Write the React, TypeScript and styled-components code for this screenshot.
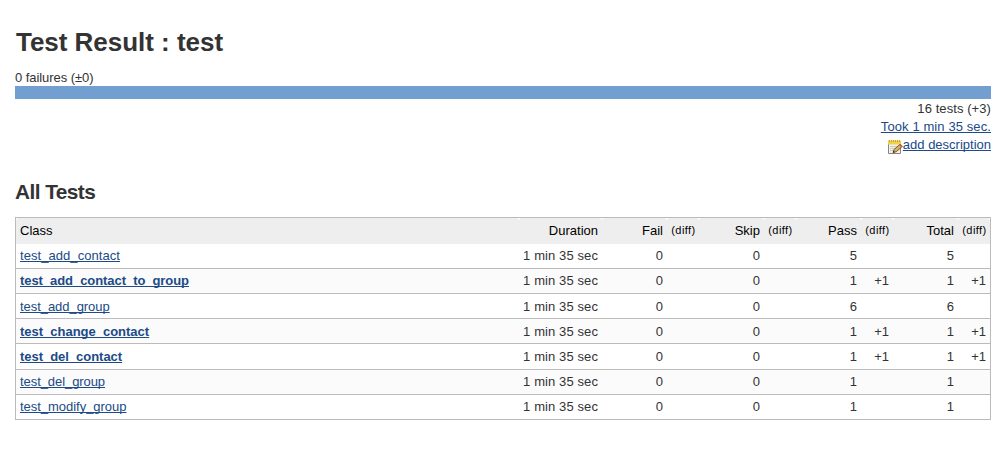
import React from 'react';
import styled, { createGlobalStyle } from 'styled-components';

const GlobalStyle = createGlobalStyle`
  * { box-sizing: border-box; }
  body {
    margin: 0;
    background: #fff;
    color: #333;
    font: 13px/18px "Liberation Sans", Arial, sans-serif;
  }
`;

const Page = styled.main`
  height: 460px;
  padding: 25px 15px 0;
`;

const Title = styled.h1`
  margin: 0;
  padding-left: 1px;
  height: 44px;
  font-size: 26px;
  line-height: 34px;
  letter-spacing: -0.03px;
`;

const Failures = styled.div`
  height: 17px;
  line-height: 17px;
  letter-spacing: -0.06px;
`;

const Bar = styled.div`
  height: 13px;
  background: #729fcf;
`;

const Summary = styled.div`
  display: flex;
  flex-direction: column;
  align-items: flex-end;
  padding-top: 1px;
`;

const Count = styled.div`
  letter-spacing: 0.08px;
`;

const Link = styled.a<{ $bold?: boolean; $ls?: number }>`
  color: #204a87;
  text-decoration: underline;
  text-underline-offset: 1px;
  text-decoration-thickness: 1px;
  text-decoration-skip-ink: none;
  font-weight: ${(p) => (p.$bold ? 700 : 400)};
  letter-spacing: ${(p) => p.$ls ?? 0}px;
`;

const Description = styled.div`
  display: flex;
  align-items: center;
  height: 18px;

  svg { margin-top: 4px; }
`;

const Subtitle = styled.h2`
  margin: 24px 0 0;
  height: 39px;
  font-size: 20.8px;
  line-height: 28px;
  letter-spacing: -0.55px;
`;

const Table = styled.div`
  border: 1px solid #bbb;
`;

const columns = '503px 83px 65px 32px 65px 32px 65px 32px 65px 32px';

const HeaderRow = styled.div`
  display: grid;
  grid-template-columns: ${columns};
  height: 26px;
  line-height: 25px;
  color: #000;
`;

const HeaderCell = styled.div<{ $left?: boolean; $small?: boolean }>`
  padding: 0 ${(p) => (p.$small ? 3.5 : 4)}px 0 ${(p) => (p.$left ? 4 : 0)}px;
  text-align: ${(p) => (p.$left ? 'left' : 'right')};
  font-size: ${(p) => (p.$small ? 11 : 13)}px;
  letter-spacing: ${(p) => (p.$small ? 0.4 : 0)}px;
  white-space: nowrap;
  background: #eee;
  border-radius: 3px 3px 0 0;
`;

const Row = styled.div<{ $h: number; $shade: boolean; $line: number }>`
  display: grid;
  grid-template-columns: ${columns};
  height: ${(p) => p.$h}px;
  line-height: ${(p) => p.$line}px;
  background: ${(p) => (p.$shade ? '#fbfbfb' : '#fff')};
  border-bottom: 1px solid #bbb;
  &:last-child { border-bottom: 0; height: 24px; }
`;

const Cell = styled.div<{ $left?: boolean }>`
  padding: 0 4px;
  text-align: ${(p) => (p.$left ? 'left' : 'right')};
  white-space: nowrap;
`;

const Duration = styled(Cell)`
  letter-spacing: 0.1px;
`;

const NotepadIcon = () => (
  <svg width="16" height="16" viewBox="0 0 16 16">
    <path d="M1.5 3.5h12v11h-12z" fill="#f1f1ee" stroke="#85867c" />
    <path d="M1 1.5h13v4H1z" fill="#edd24a" />
    <path d="M2.5 1v2M4.5 1v2M6.5 1v2M8.5 1v2M10.5 1v2M12.5 1v2" stroke="#c9a52a" />
    <path d="M3 7.5h8M3 9.5h6M3 11.5h4" stroke="#c9cac4" />
    <path d="M6.2 13.4l.9-3 6-5.2 2.2 2.3-6 5.2z" fill="#dfab62" stroke="#74501f" strokeWidth="0.9" />
    <path d="M12.2 6l1.3-1.1 1.9 2-1.3 1.1z" fill="#bf6040" />
    <path d="M5.8 13.8l.8-2 1.3 1.4z" fill="#222" />
  </svg>
);

const headers = ['Class', 'Duration', 'Fail', '(diff)', 'Skip', '(diff)', 'Pass', '(diff)', 'Total', '(diff)'];

interface Test {
  name: string;
  count: number;
  added?: boolean;
  h?: number;
  line?: number;
  ls: number;
}

const tests: Test[] = [
  { name: 'test_add_contact', count: 5, ls: 0.06 },
  { name: 'test_add_contact_to_group', count: 1, added: true, ls: -0.06 },
  { name: 'test_add_group', count: 6, line: 26, ls: -0.05 },
  { name: 'test_change_contact', count: 1, added: true, line: 26, ls: -0.01 },
  { name: 'test_del_contact', count: 1, added: true, h: 26, line: 26, ls: -0.03 },
  { name: 'test_del_group', count: 1, ls: -0.07 },
  { name: 'test_modify_group', count: 1, ls: -0.03 },
];

export default function App() {
  return (
    <>
      <GlobalStyle />
      <Page>
        <Title>Test Result : test</Title>
        <Failures>0 failures (±0)</Failures>
        <Bar />
        <Summary>
          <Count>16 tests (+3)</Count>
          <Link $ls={0.1}>Took 1 min 35 sec.</Link>
          <Description>
            <NotepadIcon />
            <Link>add description</Link>
          </Description>
        </Summary>
        <Subtitle>All Tests</Subtitle>
        <Table>
          <HeaderRow>
            {headers.map((h, i) => (
              <HeaderCell key={i} $left={i === 0} $small={h === '(diff)'}>{h}</HeaderCell>
            ))}
          </HeaderRow>
          {tests.map((t, i) => (
            <Row key={t.name} $h={t.h ?? 25} $line={t.line ?? 24} $shade={i % 2 === 1}>
              <Cell $left><Link $bold={t.added} $ls={t.ls}>{t.name}</Link></Cell>
              <Duration>1 min 35 sec</Duration>
              <Cell>0</Cell>
              <Cell />
              <Cell>0</Cell>
              <Cell />
              <Cell>{t.count}</Cell>
              <Cell>{t.added ? '+1' : ''}</Cell>
              <Cell>{t.count}</Cell>
              <Cell>{t.added ? '+1' : ''}</Cell>
            </Row>
          ))}
        </Table>
      </Page>
    </>
  );
}
